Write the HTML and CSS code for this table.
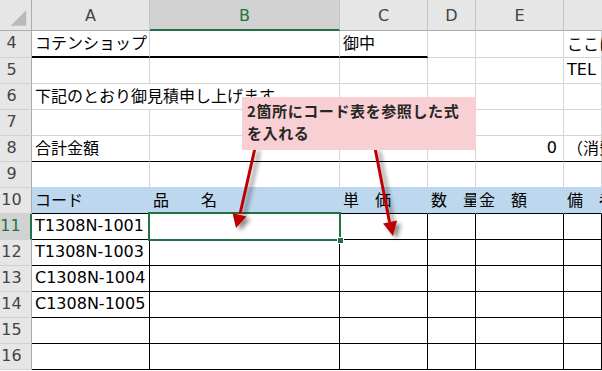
FILE: index.html
```html
<!DOCTYPE html>
<html lang="ja">
<head>
<meta charset="utf-8">
<link rel="stylesheet" href="styles.css">
</head>
<body>
<div class="page">
  <div class="sheet">
    <div class="hd corner"><svg width="32" height="31" viewBox="0 0 32 31"><polygon points="27,10 27,26 11,26" fill="#b9b9b9"/></svg></div>
    <div class="hd col">A</div>
    <div class="hd col sel">B</div>
    <div class="hd col">C</div>
    <div class="hd col">D</div>
    <div class="hd col">E</div>
    <div class="hd col last"></div>

    <div class="rh">4</div>
    <div class="c thick">コテンショップ</div>
    <div class="c thick"></div>
    <div class="c thick">御中</div>
    <div class="c"></div>
    <div class="c"></div>
    <div class="c">ここに会社名</div>

    <div class="rh">5</div>
    <div class="c"></div>
    <div class="c"></div>
    <div class="c"></div>
    <div class="c"></div>
    <div class="c"></div>
    <div class="c">TEL</div>

    <div class="rh">6</div>
    <div class="c spill">下記のとおり御見積申し上げます</div>
    <div class="c"></div>
    <div class="c"></div>
    <div class="c"></div>
    <div class="c"></div>
    <div class="c"></div>

    <div class="rh">7</div>
    <div class="c"></div>
    <div class="c"></div>
    <div class="c"></div>
    <div class="c"></div>
    <div class="c"></div>
    <div class="c"></div>

    <div class="rh">8</div>
    <div class="c line">合計金額</div>
    <div class="c line"></div>
    <div class="c line"></div>
    <div class="c line"></div>
    <div class="c line num">0</div>
    <div class="c line">（消費税込み）</div>

    <div class="rh">9</div>
    <div class="c pre"></div>
    <div class="c pre"></div>
    <div class="c pre"></div>
    <div class="c pre"></div>
    <div class="c pre"></div>
    <div class="c pre"></div>

    <div class="rh">10</div>
    <div class="c blue">コード</div>
    <div class="c blue">品　　名</div>
    <div class="c blue">単　価</div>
    <div class="c blue">数　量</div>
    <div class="c blue">金　額</div>
    <div class="c blue">備　考</div>

    <div class="rh rsel">11</div>
    <div class="c tb">T1308N-1001</div>
    <div class="c tb"></div>
    <div class="c tb"></div>
    <div class="c tb"></div>
    <div class="c tb"></div>
    <div class="c tb"></div>

    <div class="rh">12</div>
    <div class="c tb">T1308N-1003</div>
    <div class="c tb"></div>
    <div class="c tb"></div>
    <div class="c tb"></div>
    <div class="c tb"></div>
    <div class="c tb"></div>

    <div class="rh">13</div>
    <div class="c tb">C1308N-1004</div>
    <div class="c tb"></div>
    <div class="c tb"></div>
    <div class="c tb"></div>
    <div class="c tb"></div>
    <div class="c tb"></div>

    <div class="rh">14</div>
    <div class="c tb">C1308N-1005</div>
    <div class="c tb"></div>
    <div class="c tb"></div>
    <div class="c tb"></div>
    <div class="c tb"></div>
    <div class="c tb"></div>

    <div class="rh">15</div>
    <div class="c tb"></div>
    <div class="c tb"></div>
    <div class="c tb"></div>
    <div class="c tb"></div>
    <div class="c tb"></div>
    <div class="c tb"></div>

    <div class="rh">16</div>
    <div class="c tb"></div>
    <div class="c tb"></div>
    <div class="c tb"></div>
    <div class="c tb"></div>
    <div class="c tb"></div>
    <div class="c tb"></div>
  </div>

  <div class="selection"><span class="handle"></span></div>

  <svg class="arrows" width="602" height="371" viewBox="0 0 602 371">
    <defs>
      <filter id="sh" x="-50%" y="-50%" width="200%" height="200%">
        <feDropShadow dx="4" dy="3" stdDeviation="2" flood-color="#000" flood-opacity="0.45"/>
      </filter>
    </defs>
    <g filter="url(#sh)">
      <line x1="255" y1="148" x2="240" y2="214" stroke="#c00000" stroke-width="3"/>
      <polygon points="236,228 246.5,216.5 232.5,213" fill="#c00000"/>
      <line x1="375" y1="148" x2="389.5" y2="222" stroke="#c00000" stroke-width="3"/>
      <polygon points="393,236 397,220.5 383,223.5" fill="#c00000"/>
    </g>
  </svg>

  <div class="callout">2箇所にコード表を参照した式<br>を入れる</div>
</div>
</body>
</html>
```

FILE: styles.css
```css
html, body {
  margin: 0;
  padding: 0;
  background: #ffffff;
}

.page {
  position: relative;
  width: 602px;
  height: 371px;
  overflow: hidden;
  font-family: "DejaVu Sans", "Noto Sans CJK JP", sans-serif;
}

.sheet {
  display: grid;
  grid-template-columns: 32px 118px 190px 88px 48px 88px 38px;
  grid-template-rows: 31px 27px repeat(12, 26px);
}

.hd {
  background: #e6e6e6;
  border-right: 1px solid #c6c6c6;
  border-bottom: 1px solid #ababab;
  box-sizing: border-box;
  display: flex;
  align-items: center;
  justify-content: center;
  color: #444444;
  font-size: 16px;
  padding-top: 1px;
}

.corner {
  border-right-color: #ababab;
  padding: 0;
  align-items: stretch;
  justify-content: stretch;
}

.col.last {
  border-right: none;
}

.col.sel {
  background: #d2d2d2;
  color: #217346;
  border-bottom: 2px solid #217346;
}

.rh {
  background: #e6e6e6;
  border-right: 1px solid #ababab;
  border-bottom: 1px solid #d0d0d0;
  box-sizing: border-box;
  display: flex;
  align-items: center;
  justify-content: center;
  padding: 0 8px 3px 0;
  color: #444444;
  font-size: 16px;
}

.rh.rsel {
  background: #d2d2d2;
  color: #217346;
  border-right: 2px solid #217346;
  padding-right: 9px;
}

.c {
  box-sizing: border-box;
  border-right: 1px solid #d4d4d4;
  border-bottom: 1px solid #d4d4d4;
  display: flex;
  align-items: center;
  padding: 0 3px 3px 3px;
  font-size: 16px;
  color: #000000;
  white-space: nowrap;
  overflow: visible;
  min-width: 0;
}

.c.thick {
  border-bottom: 2px solid #000000;
}

.c.spill {
  border-right-color: transparent;
}

.c.line {
  border-bottom-color: #000000;
}

.c.num {
  justify-content: flex-end;
  padding-right: 6px;
}

.c.pre {
  border-bottom-color: #bdd7ee;
}

.c.blue {
  background: #bdd7ee;
  border-right-color: #bdd7ee;
  border-bottom-color: #000000;
  padding-left: 3px;
}

.c.tb {
  border-right-color: #000000;
  border-bottom-color: #000000;
}

.selection {
  position: absolute;
  left: 148px;
  top: 212px;
  width: 193px;
  height: 29px;
  box-sizing: border-box;
  border: 2px solid #217346;
}

.handle {
  position: absolute;
  right: -5px;
  bottom: -5px;
  width: 5px;
  height: 5px;
  background: #217346;
  border: 1px solid #ffffff;
}

.arrows {
  position: absolute;
  left: 0;
  top: 0;
}

.callout {
  position: absolute;
  left: 242px;
  top: 97px;
  width: 234px;
  height: 53px;
  box-sizing: border-box;
  background: #f8cfd3;
  padding: 3px 0 0 5px;
  font-family: "Noto Sans CJK JP", sans-serif;
  font-weight: 700;
  font-size: 15px;
  letter-spacing: 0.6px;
  line-height: 22px;
  color: #262626;
}
```
